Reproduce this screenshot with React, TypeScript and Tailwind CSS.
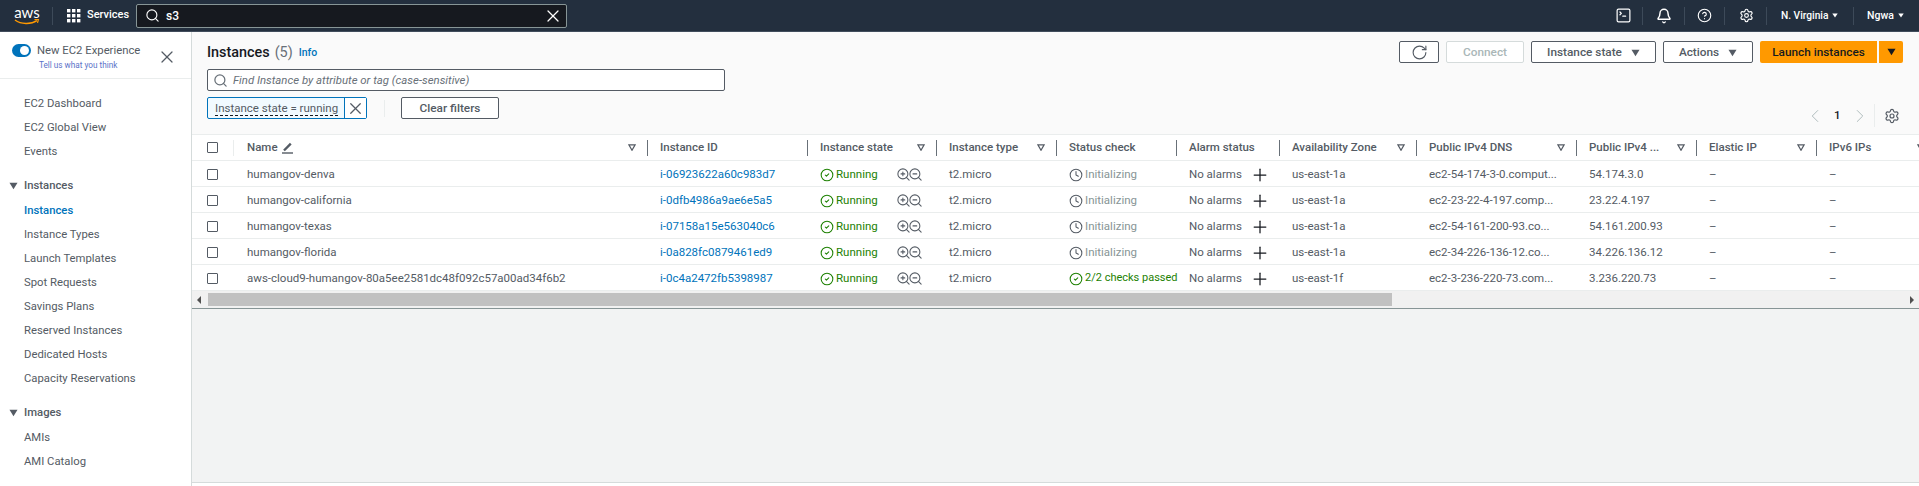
import React from "react";
import {
  Bell,
  ChevronLeft,
  ChevronRight,
  CircleCheck,
  CircleHelp,
  Clock,
  Plus,
  RotateCw,
  Search,
  Settings,
  SquareTerminal,
  X,
  ZoomIn,
  ZoomOut,
} from "lucide-react";

const Caret = ({ className = "" }: { className?: string }) => (
  <svg viewBox="0 0 10 8" className={className} fill="currentColor">
    <path d="M0.5 0.5h9L5 7.5z" />
  </svg>
);

const FilterCaret = () => (
  <svg viewBox="0 0 10 9" className="ml-auto mr-[11px] h-[7px] w-[8px] shrink-0 text-[#545b64]">
    <path d="M1 1h8L5 8z" fill="none" stroke="currentColor" strokeWidth="1.6" />
  </svg>
);

const GridIcon = () => (
  <svg viewBox="0 0 14 14" className="h-[14px] w-[14px]" fill="#fff">
    {[0, 5, 10].map((y) =>
      [0, 5, 10].map((x) => <rect key={`${x}-${y}`} x={x} y={y} width="3.4" height="3.4" />),
    )}
  </svg>
);

const columns = [
  { label: "Name", width: "w-[413px]", filter: true },
  { label: "Instance ID", width: "w-[160px]", filter: false },
  { label: "Instance state", width: "w-[129px]", filter: true },
  { label: "Instance type", width: "w-[120px]", filter: true },
  { label: "Status check", width: "w-[120px]", filter: false },
  { label: "Alarm status", width: "w-[103px]", filter: false },
  { label: "Availability Zone", width: "w-[137px]", filter: true },
  { label: "Public IPv4 DNS", width: "w-[160px]", filter: true },
  { label: "Public IPv4 ...", width: "w-[120px]", filter: true },
  { label: "Elastic IP", width: "w-[120px]", filter: true },
  { label: "IPv6 IPs", width: "w-[120px]", filter: true },
];

const instances = [
  { name: "humangov-denva", id: "i-06923622a60c983d7", passed: false, zone: "us-east-1a", dns: "ec2-54-174-3-0.comput...", ip: "54.174.3.0" },
  { name: "humangov-california", id: "i-0dfb4986a9ae6e5a5", passed: false, zone: "us-east-1a", dns: "ec2-23-22-4-197.comp...", ip: "23.22.4.197" },
  { name: "humangov-texas", id: "i-07158a15e563040c6", passed: false, zone: "us-east-1a", dns: "ec2-54-161-200-93.co...", ip: "54.161.200.93" },
  { name: "humangov-florida", id: "i-0a828fc0879461ed9", passed: false, zone: "us-east-1a", dns: "ec2-34-226-136-12.co...", ip: "34.226.136.12" },
  { name: "aws-cloud9-humangov-80a5ee2581dc48f092c57a00ad34f6b2", id: "i-0c4a2472fb5398987", passed: true, zone: "us-east-1f", dns: "ec2-3-236-220-73.com...", ip: "3.236.220.73" },
];

const navTop = ["EC2 Dashboard", "EC2 Global View", "Events"];
const navInstances = ["Instances", "Instance Types", "Launch Templates", "Spot Requests", "Savings Plans", "Reserved Instances", "Dedicated Hosts", "Capacity Reservations"];
const navImages = ["AMIs", "AMI Catalog"];

const NavItem = ({ label, active }: { label: string; active?: boolean }) => (
  <div className={`flex h-6 items-center pl-[24px] ${active ? "font-medium text-[#0073bb]" : "text-[#545b64]"}`}>{label}</div>
);

const NavGroup = ({ label }: { label: string }) => (
  <div className="mt-[10px] flex h-6 items-center pl-[9px] font-medium text-[#545b64]">
    <Caret className="mr-[6px] h-[8px] w-[9px]" />
    {label}
  </div>
);

const Sep = ({ className }: { className: string }) => <span className={`h-[18px] w-px bg-[#3d4a59] ${className}`} />;

const Checkbox = () => <span className="h-[11px] w-[11px] rounded-[1px] border border-[#545b64] bg-white" />;

const OutlineButton = ({ children, width }: { children: React.ReactNode; width: string }) => (
  <button className={`flex h-[22px] items-center justify-center gap-[9px] rounded-[2px] border border-[#545b64] bg-white pt-px text-[11.8px] font-medium text-[#545b64] ${width}`}>
    {children}
  </button>
);

export default function App() {
  return (
    <div className="flex h-[486px] w-[1919px] flex-col overflow-hidden bg-white text-[11.5px] font-['Roboto',sans-serif] text-[#545b64]">
      <header className="flex h-[32px] shrink-0 items-center border-b border-[#414d5c] bg-[#232f3e] text-white">
        <div className="ml-[14px] flex w-[26px] flex-col items-center">
          <span className="h-[13px] text-[15px] leading-[13px] font-['Lato',sans-serif]">aws</span>
          <svg viewBox="0 0 26 6" className="h-[6px] w-[26px]">
            <path d="M1 1c6 4.5 16 4.5 22 .6" fill="none" stroke="#ff9900" strokeWidth="1.5" />
            <path d="M20.5 .6l4-.4-1 3.6" fill="none" stroke="#ff9900" strokeWidth="1.2" />
          </svg>
        </div>
        <Sep className="ml-[12px]" />
        <div className="ml-[14px]"><GridIcon /></div>
        <span className="ml-[6px] w-[36px] text-[11px] font-medium whitespace-nowrap">Services</span>
        <div className="ml-[13px] flex h-[24px] w-[431px] items-center rounded-[2px] border border-[#879596] bg-[#16191f] pr-[3px] pl-[8px]">
          <Search size={15} strokeWidth={1.8} />
          <span className="ml-[6px] text-[12px] font-medium">s3</span>
          <X size={20} strokeWidth={1.5} className="ml-auto" />
        </div>
        <div className="ml-auto flex items-center">
          <SquareTerminal size={17} strokeWidth={1.7} />
          <Sep className="mr-[13px] ml-[10px]" />
          <Bell size={16} strokeWidth={2.2} />
          <Sep className="mx-[12px]" />
          <CircleHelp size={15} strokeWidth={1.8} />
          <Sep className="mr-[14px] ml-[12px]" />
          <Settings size={15} strokeWidth={1.8} />
          <Sep className="mr-[14px] ml-[12px]" />
          <span className="w-[46px] text-[10.2px] font-medium whitespace-nowrap">N. Virginia</span>
          <Caret className="ml-[5px] h-[5px] w-[6px]" />
          <Sep className="mr-[13px] ml-[15px]" />
          <span className="w-[25px] text-[10.5px] font-medium">Ngwa</span>
          <Caret className="mr-[15px] ml-[6px] h-[5px] w-[6px]" />
        </div>
      </header>

      <div className="flex min-h-0 flex-1">
        <aside className="w-[192px] shrink-0 border-r border-[#d5dbdb] bg-white text-[11.3px]">
          <div className="flex h-[47px] border-b border-[#eaeded] pt-[12px] pl-[12px]">
            <span className="flex h-[13px] w-[19px] items-center justify-end rounded-full bg-[#0073bb] pr-[2px]">
              <span className="h-[9px] w-[9px] rounded-full bg-white" />
            </span>
            <div className="ml-[6px] w-[103px] shrink-0 whitespace-nowrap">
              <div className="text-[11.3px] leading-[13px]">New EC2 Experience</div>
              <div className="mt-[2px] ml-[2px] text-[8.2px] leading-[13px] text-[#5a72c8]">Tell us what you think</div>
            </div>
            <X size={20} strokeWidth={1.5} className="ml-[17px] mt-[3px]" />
          </div>
          <nav className="pt-[13px]">
            {navTop.map((item) => <NavItem key={item} label={item} />)}
            <NavGroup label="Instances" />
            <div className="mt-px">
              {navInstances.map((item, i) => <NavItem key={item} label={item} active={i === 0} />)}
            </div>
            <NavGroup label="Images" />
            <div className="mt-px">
              {navImages.map((item) => <NavItem key={item} label={item} />)}
            </div>
          </nav>
        </aside>

        <main className="flex min-w-0 flex-1 flex-col bg-[#f2f3f3]">
          <section className="flex h-[102px] shrink-0 justify-between bg-[#fafafa] pt-[9px] pr-[16px] pl-[15px]">
            <div>
              <div className="flex h-[22px] items-center pt-[2px]">
                <h1 className="text-[14.4px] font-medium text-[#16191f]">Instances</h1>
                <span className="ml-[5px] text-[14.4px] text-[#687078]">(5)</span>
                <span className="ml-[6px] text-[10.5px] font-medium text-[#0073bb]">Info</span>
              </div>
              <div className="mt-[6px] flex h-[22px] w-[518px] items-center rounded-[2px] border border-[#545b64] bg-white pl-[5px] text-[11.4px] italic text-[#687078]">
                <Search size={15} strokeWidth={2} className="mr-[5px]" />
                <span className="pt-px">Find Instance by attribute or tag (case-sensitive)</span>
              </div>
              <div className="mt-[6px] flex h-[22px] items-center">
                <div className="flex h-[22px] w-[160px] items-center rounded-[2px] border border-[#0073bb] bg-[#f1faff]">
                  <span className="ml-[7px] w-[123px] shrink-0 border-b border-dashed border-[#16191f] pt-px leading-[13px] whitespace-nowrap">Instance state = running</span>
                  <span className="ml-[6px] flex h-full flex-1 items-center justify-center border-l border-[#0073bb] bg-white">
                    <X size={19} strokeWidth={1.6} />
                  </span>
                </div>
                <span className="ml-[17px] h-[17px] w-px bg-[#eaeded]" />
                <button className="ml-[16px] h-[22px] w-[98px] rounded-[2px] border border-[#545b64] bg-white pt-px text-[11.8px] font-medium">Clear filters</button>
              </div>
            </div>
            <div className="flex flex-col items-end pb-[7px]">
              <div className="flex gap-[7px]">
                <OutlineButton width="w-[40px]"><RotateCw size={17} strokeWidth={1.6} /></OutlineButton>
                <button className="h-[22px] w-[78px] rounded-[2px] border border-[#d5dbdb] bg-white pt-px text-[11.8px] font-medium text-[#aab7b8]">Connect</button>
                <OutlineButton width="w-[125px]">Instance state<Caret className="h-[8px] w-[9px]" /></OutlineButton>
                <OutlineButton width="w-[90px]">Actions<Caret className="h-[8px] w-[9px]" /></OutlineButton>
                <div className="flex gap-[2px]">
                  <button className="h-[22px] w-[117px] rounded-l-[2px] bg-[#ff9900] pt-px text-[11.8px] font-medium text-[#16191f]">Launch instances</button>
                  <button className="flex h-[22px] w-[24px] items-center justify-center rounded-r-[2px] bg-[#ff9900] text-[#16191f]"><Caret className="h-[8px] w-[9px]" /></button>
                </div>
              </div>
              <div className="mt-auto flex h-[23px] items-center pr-[3px]">
                <ChevronLeft size={22} strokeWidth={1} className="text-[#aab7b8]" />
                <span className="mr-[9px] ml-[8px] w-[6px] font-medium text-[#16191f]">1</span>
                <ChevronRight size={22} strokeWidth={1} className="text-[#aab7b8]" />
                <span className="mr-[9px] ml-[3px] h-[23px] w-px bg-[#eaeded]" />
                <Settings size={16} strokeWidth={1.8} />
              </div>
            </div>
          </section>

          <div className="flex h-[27px] shrink-0 items-center border-y border-[#eaeded] bg-white">
            <div className="flex w-[42px] shrink-0 items-center pl-[15px]">
              <Checkbox />
              <span className="ml-[15px] h-[16px] w-px bg-[#eaeded]" />
            </div>
            {columns.map((col, i) => (
              <div key={col.label} className={`flex h-[16px] shrink-0 items-center font-medium ${col.width} ${i === 0 ? "pl-[13px]" : "border-l border-[#687078] pl-[12px]"}`}>
                {col.label}
                {i === 0 && (
                  <svg viewBox="0 0 13 12" className="ml-[3px] h-[12px] w-[13px]" fill="none" stroke="currentColor">
                    <path d="M3 8.5L9.8 1.7" strokeWidth="2.4" />
                    <path d="M1 11h11" strokeWidth="1.4" />
                  </svg>
                )}
                {col.filter && <FilterCaret />}
              </div>
            ))}
          </div>

          {instances.map((row) => (
            <div key={row.id} className="flex h-[26px] shrink-0 items-center border-b border-[#eaeded] bg-white pt-[2px]">
              <div className="flex w-[42px] shrink-0 pl-[15px]"><Checkbox /></div>
              <div className="w-[413px] shrink-0 pl-[13px]">{row.name}</div>
              <div className="w-[160px] shrink-0 pl-[13px] text-[#0073bb]">{row.id}</div>
              <div className="flex w-[129px] shrink-0 items-center pl-[13px] text-[#1d8102]">
                <CircleCheck size={14} strokeWidth={1.8} className="mr-[2px] shrink-0" />
                Running
                <span className="ml-[18px] flex text-[#545b64]">
                  <ZoomIn size={15} strokeWidth={1.7} />
                  <ZoomOut size={15} strokeWidth={1.7} className="-ml-[3px]" />
                </span>
              </div>
              <div className="w-[120px] shrink-0 pl-[13px]">t2.micro</div>
              {row.passed ? (
                <div className="flex w-[120px] shrink-0 items-center pl-[13px] text-[11px] whitespace-nowrap text-[#1d8102]">
                  <CircleCheck size={14} strokeWidth={1.8} className="mr-[2px] shrink-0" />
                  2/2 checks passed
                </div>
              ) : (
                <div className="flex w-[120px] shrink-0 items-center pl-[13px] text-[#879596]">
                  <Clock size={14} strokeWidth={1.8} className="mr-[2px] shrink-0 text-[#545b64]" />
                  Initializing
                </div>
              )}
              <div className="flex w-[103px] shrink-0 items-center pl-[13px]">
                No alarms
                <Plus size={20} strokeWidth={1.5} className="ml-[8px] text-[#16191f]" />
              </div>
              <div className="w-[137px] shrink-0 pl-[13px]">{row.zone}</div>
              <div className="w-[160px] shrink-0 pl-[13px]">{row.dns}</div>
              <div className="w-[120px] shrink-0 pl-[13px]">{row.ip}</div>
              <div className="w-[120px] shrink-0 pl-[13px]">–</div>
              <div className="w-[120px] shrink-0 pl-[13px]">–</div>
            </div>
          ))}

          <div className="flex h-[18px] shrink-0 items-center border-b border-[#879596] bg-[#f1f1f1]">
            <span className="ml-[5px] h-0 w-0 border-y-[4px] border-r-[4px] border-y-transparent border-r-[#505050]" />
            <div className="ml-[7px] h-[13px] w-[1184px] bg-[#c1c1c1]" />
            <span className="mr-[5px] ml-auto h-0 w-0 border-y-[4px] border-l-[4px] border-y-transparent border-l-[#505050]" />
          </div>

          <div className="flex-1" />
          <div className="h-[4px] shrink-0 border-t border-[#d5dbdb] bg-white" />
        </main>
      </div>
    </div>
  );
}
